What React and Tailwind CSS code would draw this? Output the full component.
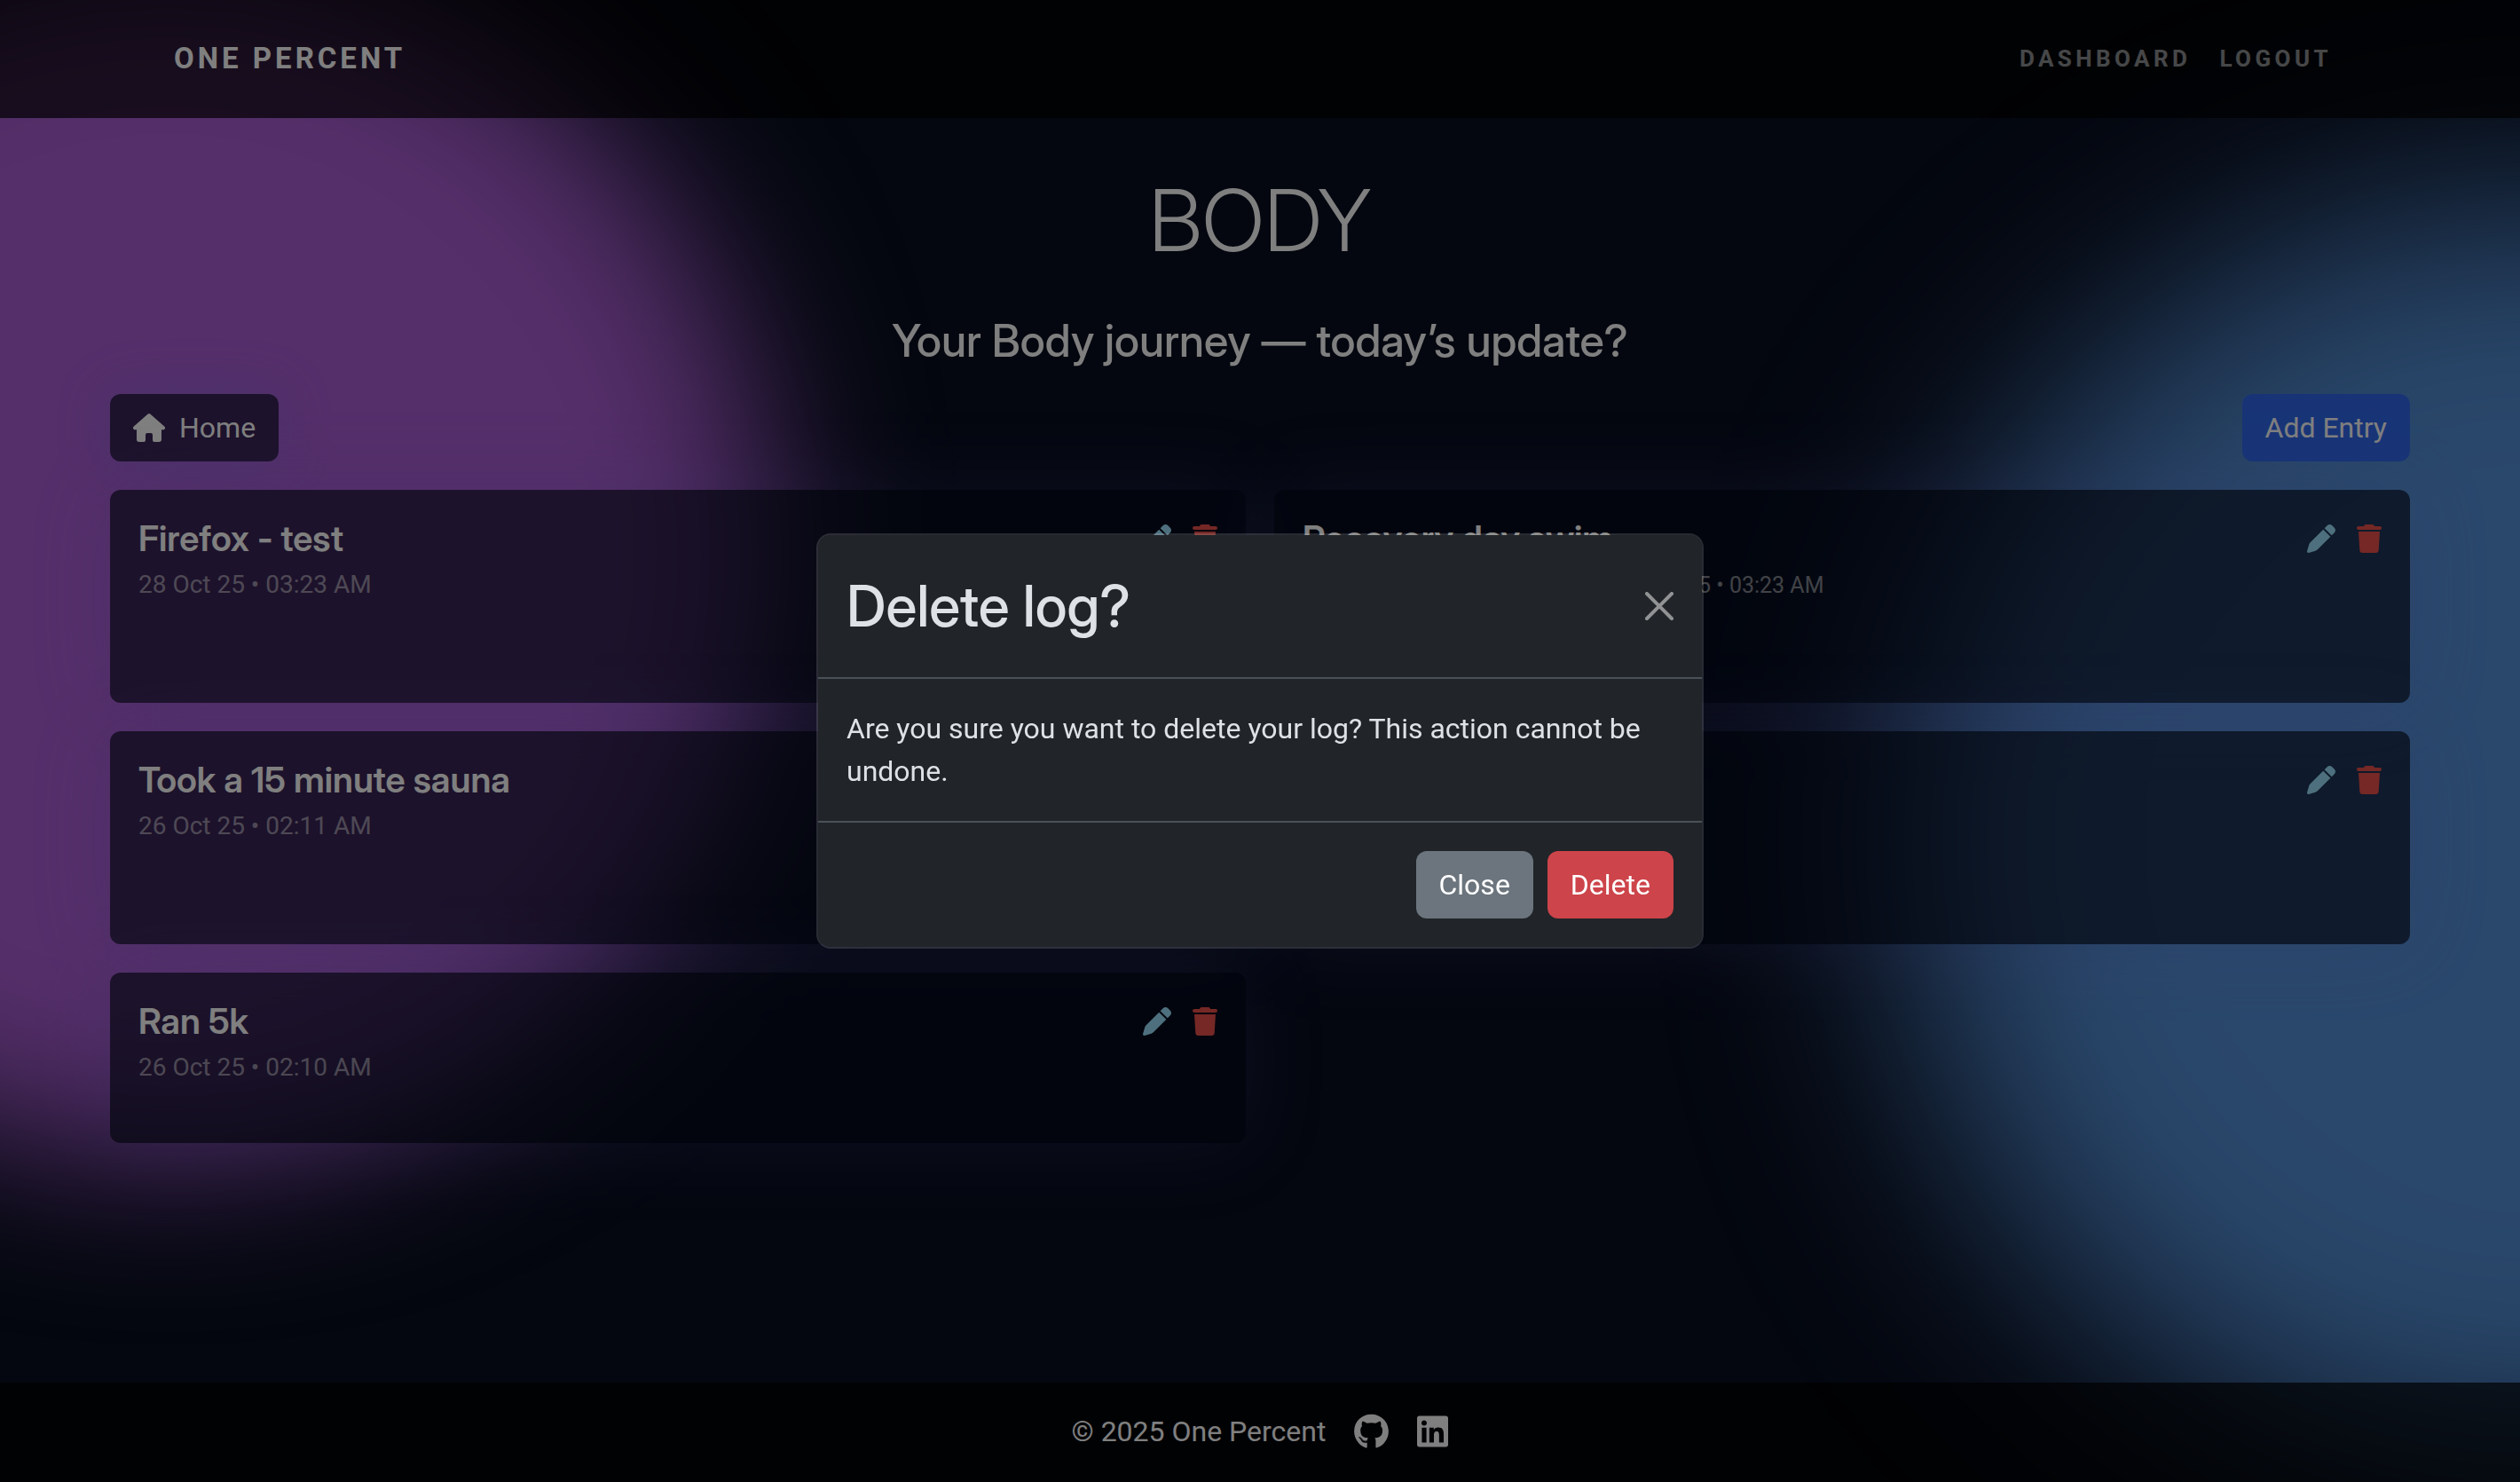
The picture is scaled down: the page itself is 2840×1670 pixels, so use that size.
import React from "react";
import { FaGithub, FaLinkedin } from "react-icons/fa";
import { FaPen, FaTrash } from "react-icons/fa6";

const logs = [
  { id: 1, title: "Firefox - test", date: "28 Oct 25 • 03:23 AM" },
  { id: 2, title: "Recovery day swim", edited: "28 Oct 25 • 03:23 AM", tall: true },
  { id: 3, title: "Took a 15 minute sauna", date: "26 Oct 25 • 02:11 AM" },
  { id: 4, title: "", tall: true },
  { id: 5, title: "Ran 5k", date: "26 Oct 25 • 02:10 AM" },
];

function HomeIcon() {
  return (
    <svg viewBox="0 0 36 32" className="h-8 w-9" fill="currentColor" aria-hidden="true">
      <path d="M16.700.6a2 2 0 0 1 2.600 0L35.200 14.600c1.700 1.500.7 3.700-1.400 3.700H32v11a2.800 2.800 0 0 1-2.800 2.700h-4.600a2.600 2.600 0 0 1-2.600-2.600V24a2 2 0 0 0-2-2h-4a2 2 0 0 0-2 2v5.400a2.600 2.600 0 0 1-2.600 2.600H6.800A2.800 2.800 0 0 1 4 29.300v-11H2.200c-2.100 0-3.100-2.200-1.400-3.700Z" />
    </svg>
  );
}

function CloseIcon() {
  return (
    <svg viewBox="0 0 16 16" className="size-8" fill="currentColor" aria-hidden="true">
      <path d="M.293.293a1 1 0 0 1 1.414 0L8 6.586 14.293.293a1 1 0 1 1 1.414 1.414L9.414 8l6.293 6.293a1 1 0 0 1-1.414 1.414L8 9.414l-6.293 6.293a1 1 0 0 1-1.414-1.414L6.586 8 .293 1.707a1 1 0 0 1 0-1.414z" />
    </svg>
  );
}

function LogCard({ log }) {
  return (
    <article className="rounded-xl bg-[rgba(5,11,28,0.68)] p-8 shadow-[0_0_90px_rgba(110,100,210,0.2)]">
      <div className="flex items-center justify-between">
        <h3 className="min-h-[46px] font-['Inter_Display',Inter,sans-serif] text-[40px] leading-[46px] font-semibold">
          {log.title}
        </h3>
        <div className="flex items-center gap-6">
          <button type="button" aria-label="Edit log" className="text-[#9ce0fc]">
            <FaPen className="size-8" />
          </button>
          <button type="button" aria-label="Delete log" className="text-[#ea504a]">
            <FaTrash className="h-8 w-7" />
          </button>
        </div>
      </div>
      <p className="mt-2 min-h-[42px] text-[28px] leading-[42px] text-white/50">
        {log.date}
        {log.edited && <small className="pl-[353px] text-[25px] leading-none">{log.edited}</small>}
      </p>
      {log.tall && <div className="h-12" />}
      <div className="h-8" />
    </article>
  );
}

export default function App() {
  return (
    <div className="relative isolate flex min-h-screen flex-col overflow-hidden bg-[#080e1f] font-[Roboto,sans-serif] text-[32px] leading-[48px] text-white">
      <div className="absolute -top-[55px] -left-[490px] -z-10 size-[1360px] rounded-full bg-[#aa5ed4] blur-[90px]" />
      <div className="absolute top-[225px] -right-[740px] -z-10 size-[1440px] rounded-full bg-[#5490d8] blur-[120px]" />

      <header className="flex h-[133px] items-center justify-between bg-black/70 px-[196px] pb-0.5">
        <a href="#home" className="text-[33px] font-bold tracking-[4px]">ONE PERCENT</a>
        <nav className="flex text-[26px] font-bold tracking-[0.17em] text-white/55">
          <a href="#dashboard" className="px-4">DASHBOARD</a>
          <a href="#logout" className="px-4">LOGOUT</a>
        </nav>
      </header>

      <main className="flex-1 px-[124px] pt-[58px] pb-16">
        <h1 className="text-center font-['Inter_Display',Inter,sans-serif] text-[96px] leading-[115px] font-light">BODY</h1>
        <h2 className="mt-12 text-center font-['Inter_Display',Inter,sans-serif] text-[50px] leading-[60px] font-medium">
          Your Body journey — today’s update?
        </h2>
        <div className="mt-[30px] flex items-center justify-between">
          <a
            href="#home"
            className="flex h-[76px] items-center gap-4 rounded-xl bg-[rgba(5,11,28,0.68)] px-[26px] shadow-[0_0_60px_rgba(80,120,220,0.25)]"
          >
            <HomeIcon />
            Home
          </a>
          <button type="button" className="h-[76px] rounded-xl bg-[#3069ee] px-[26px]">Add Entry</button>
        </div>
        <section className="mt-8 grid grid-cols-2 gap-8">
          {logs.map((log) => (
            <LogCard key={log.id} log={log} />
          ))}
        </section>
      </main>

      <footer className="flex h-[112px] items-center justify-center gap-8 bg-black/70 pb-0.5">
        <span>© 2025 One Percent</span>
        <a href="#github" aria-label="GitHub"><FaGithub className="h-10 w-[39px]" /></a>
        <a href="#linkedin" aria-label="LinkedIn"><FaLinkedin className="h-10 w-[35px]" /></a>
      </footer>

      <div className="fixed inset-0 flex items-center justify-center bg-black/50">
        <div
          role="dialog"
          aria-modal="true"
          aria-labelledby="dialog-title"
          className="w-full max-w-[1000px] rounded-2xl border-2 border-white/15 bg-[#212529] bg-clip-padding text-[#dee2e6]"
        >
          <div className="flex items-center justify-between border-b-2 border-[#495057] p-8">
            <h2 id="dialog-title" className="font-['Inter_Display',Inter,sans-serif] text-[64px] leading-[96px] font-medium">
              Delete log?
            </h2>
            <button type="button" aria-label="Close dialog" className="text-white/50"><CloseIcon /></button>
          </div>
          <p className="p-8">Are you sure you want to delete your log? This action cannot be undone.</p>
          <div className="flex justify-end gap-4 border-t-2 border-[#495057] p-8 text-white">
            <button type="button" className="h-[76px] rounded-xl bg-[#6c757d] px-[26px]">Close</button>
            <button type="button" className="h-[76px] rounded-xl bg-[#cd444a] px-[26px]">Delete</button>
          </div>
        </div>
      </div>
    </div>
  );
}
